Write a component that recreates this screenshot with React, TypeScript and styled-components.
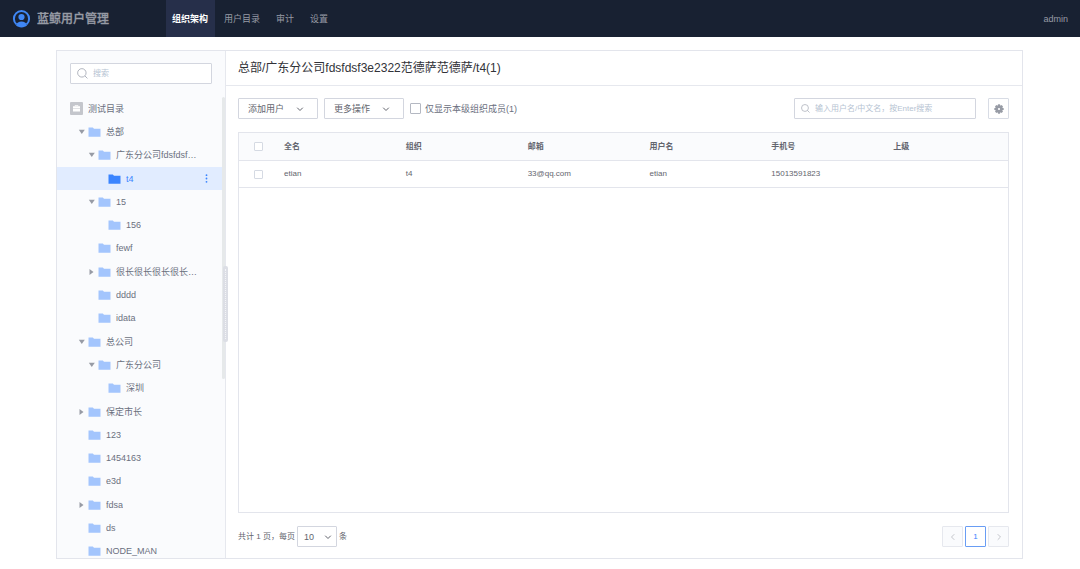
import React, { useState } from "react";
import styled, { createGlobalStyle, css } from "styled-components";

const GlobalStyle = createGlobalStyle`
  *, *::before, *::after { box-sizing: border-box; }
  body {
    margin: 0;
    background: #fff;
    color: #63656e;
    font: 9px/12px "Liberation Sans", "Noto Sans CJK SC", sans-serif;
  }
  button, input, select { font: inherit; color: inherit; margin: 0; }
  button { cursor: pointer; }
`;

const Page = styled.div`
  height: 100vh;
  display: flex;
  flex-direction: column;
`;

const TopBar = styled.header`
  flex: none;
  height: 37px;
  padding: 0 12px;
  display: flex;
  align-items: center;
  background: #182132;
  color: #979ba5;
`;

const Brand = styled.a`
  width: 154px;
  display: flex;
  align-items: center;
  gap: 6px;
  color: #979ba5;
  font-size: 12px;
  font-weight: 500;
  line-height: 16px;
  text-decoration: none;
  -webkit-text-stroke: 0.3px currentColor;
`;

const Nav = styled.nav`
  flex: 1;
  align-self: stretch;
  display: flex;
`;

const NavLink = styled.a<{ $active?: boolean }>`
  display: flex;
  align-items: center;
  padding: 0 8px;
  color: #979ba5;
  text-decoration: none;
  ${(p) =>
    p.$active &&
    css`
      margin-right: 1px;
      padding: 0 7px 0 6px;
      background: #262f4a;
      color: #fff;
      font-weight: 700;
    `}
`;

const Panel = styled.main`
  flex: 1;
  min-height: 0;
  margin: 13px 57px 10px 56px;
  display: flex;
  border: 1px solid #e3e5ec;
`;

const Sidebar = styled.aside`
  position: relative;
  flex: none;
  width: 169px;
  display: flex;
  flex-direction: column;
  background: #fafbfd;
  border-right: 1px solid #e6e8ee;
`;

const SearchBox = styled.label<{ $width?: number }>`
  flex: none;
  height: 21px;
  width: ${(p) => (p.$width ? `${p.$width}px` : "auto")};
  padding: 0 6px;
  display: flex;
  align-items: center;
  gap: 5px;
  background: #fff;
  border: 1px solid #d3d6df;
  border-radius: 1px;
  svg { flex: none; }
  input {
    flex: 1;
    min-width: 0;
    padding: 0;
    border: 0;
    outline: 0;
    background: none;
    font-size: 8px;
  }
  input::placeholder { color: #b6c3d2; opacity: 1; }
`;

const SideSearch = styled.div`
  padding: 12px 13px 13px;
`;

const TreeViewport = styled.div`
  flex: 1;
  min-height: 0;
  margin-right: 3px;
  overflow: hidden;
`;

const TreeList = styled.ul`
  height: 466px;
  margin: 0;
  padding: 0;
  display: grid;
  grid-template-columns: minmax(0, 1fr);
  grid-auto-rows: 1fr;
  list-style: none;
`;

const TreeRow = styled.li<{ $depth: number; $active?: boolean }>`
  min-height: 0;
  padding-left: ${(p) => (p.$depth ? 11 + p.$depth * 10 : 13)}px;
  padding-right: ${(p) => (p.$active ? 12 : 22)}px;
  display: flex;
  align-items: center;
  color: ${(p) => (p.$active ? "#3a84ff" : "#6b7080")};
  background: ${(p) => (p.$active ? "#e1ecff" : "transparent")};
`;

const Caret = styled.button`
  flex: none;
  width: 10px;
  height: 12px;
  padding: 0;
  border: 0;
  background: none;
  display: flex;
  align-items: center;
  color: #979ba5;
`;

const CaretSpace = styled.span`
  flex: none;
  width: 10px;
`;

const NodeLabel = styled.a`
  flex: 1;
  min-width: 0;
  display: flex;
  align-items: center;
  gap: 5px;
  color: inherit;
  text-decoration: none;
  svg { flex: none; }
  span {
    overflow: hidden;
    white-space: nowrap;
    text-overflow: ellipsis;
  }
`;

const MoreButton = styled.button`
  flex: none;
  width: 7px;
  height: 12px;
  padding: 0;
  border: 0;
  background: none;
  display: flex;
  align-items: center;
  justify-content: center;
`;

const ScrollThumb = styled.div`
  position: absolute;
  top: 46px;
  right: 0;
  width: 3px;
  height: 282px;
  border-radius: 2px;
  background: #e6e9ea;
`;

const ResizeHandle = styled.div`
  position: absolute;
  top: 215px;
  right: -3px;
  width: 5px;
  height: 76px;
  border-radius: 2px;
  background: #dcdee5;
  display: flex;
  justify-content: center;
  &::after {
    content: "";
    margin: 3px 0;
    border-left: 1px dotted #f4f5f8;
  }
`;

const Content = styled.section`
  flex: 1;
  min-width: 0;
  display: flex;
  flex-direction: column;
`;

const Title = styled.h1`
  flex: none;
  height: 35px;
  margin: 0;
  padding: 0 12px;
  border-bottom: 1px solid #e6e8ee;
  color: #313238;
  font-size: 12px;
  font-weight: 400;
  line-height: 34px;
`;

const Body = styled.div`
  flex: 1;
  min-height: 0;
  padding: 12px 13px 11px 12px;
  display: flex;
  flex-direction: column;
  gap: 13px;
`;

const Toolbar = styled.div`
  display: flex;
  align-items: center;
  gap: 6px;
`;

const MenuButton = styled.button`
  width: 80px;
  height: 21px;
  padding: 0 13px 0 9px;
  display: flex;
  align-items: center;
  justify-content: space-between;
  background: #fff;
  border: 1px solid #d3d6df;
  border-radius: 1px;
`;

const CheckLabel = styled.label`
  flex: 1;
  display: flex;
  align-items: center;
  gap: 4px;
  color: #6b7080;
`;

const Check = styled.input.attrs({ type: "checkbox" })<{ $size: number; $tone: string }>`
  appearance: none;
  display: block;
  flex: none;
  width: ${(p) => p.$size}px;
  height: ${(p) => p.$size}px;
  border: 1px solid ${(p) => p.$tone};
  border-radius: 1px;
  background: #fff;
  &:checked { background: #3a84ff; border-color: #3a84ff; }
`;

const SquareButton = styled.button<{ $current?: boolean }>`
  width: 21px;
  height: 21px;
  padding: 0;
  display: flex;
  align-items: center;
  justify-content: center;
  border: 1px solid ${(p) => (p.$current ? "#699df4" : "#d8dce5")};
  border-radius: 1px;
  background: #fff;
  color: ${(p) => (p.$current ? "#3a84ff" : "#979ba5")};
  font-size: 8px;
  &:disabled {
    background: #fafbfd;
    border-color: #e6e8ee;
    color: #c4c6cc;
  }
`;

const SettingsSlot = styled.div`
  margin-left: 6px;
`;

const TableFrame = styled.div`
  flex: 1;
  min-height: 0;
  border: 1px solid #e3e5ec;
`;

const Table = styled.table`
  width: 100%;
  table-layout: fixed;
  border-collapse: separate;
  border-spacing: 0;
  font-size: 8px;
  text-align: left;
  th, td {
    height: 27px;
    padding: 0 7px;
    border-bottom: 1px solid #e3e5ec;
  }
  th {
    height: 28px;
    background: #fafbfd;
  }
  th:first-child, td:first-child {
    width: 38px;
    padding: 0 0 0 15px;
  }
`;

const Pager = styled.footer`
  display: flex;
  align-items: center;
  gap: 2px;
  font-size: 8px;
`;

const SizeLabel = styled.label`
  flex: 1;
  display: flex;
  align-items: center;
  gap: 2px;
`;

const SizeField = styled.span`
  display: grid;
  width: 40px;
  height: 21px;
  align-items: center;
  select, svg { grid-area: 1 / 1; }
  select {
    appearance: none;
    width: 100%;
    height: 21px;
    padding: 0 6px;
    border: 1px solid #d3d6df;
    border-radius: 1px;
    background: #fff;
    font-size: 9px;
  }
  svg {
    justify-self: end;
    margin-right: 5px;
    pointer-events: none;
  }
`;

const Logo = () => (
  <svg width="19" height="19" viewBox="0 0 19 19" aria-hidden="true">
    <path d="M4.400 15.300A7.600 7.600 0 1 1 14.600 15.300" fill="none" stroke="#3f87f5" strokeWidth="2" />
    <circle cx="9.500" cy="8" r="3.100" fill="#3f87f5" />
    <path d="M3.900 16.300C4.700 13.600 6.800 12.500 9.500 12.500s4.800 1.100 5.600 3.800C13.700 17.600 11.800 18.400 9.500 18.400s-4.200-.8-5.600-2.100z" fill="#3f87f5" />
  </svg>
);

const SearchIcon = ({ size }: { size: number }) => (
  <svg width={size} height={size} viewBox="0 0 12 12" fill="none" stroke="#a9adb8" aria-hidden="true">
    <circle cx="5.300" cy="5.300" r="4.600" />
    <path d="M8.700 8.700 11.400 11.400" />
  </svg>
);

const Folder = ({ active }: { active?: boolean }) => (
  <svg width="13" height="10" viewBox="0 0 13 10" aria-hidden="true">
    <path d="M.5.500h4.300L6 1.800h6.500v8H.5z" fill={active ? "#3a84ff" : "#a3c5fd"} />
  </svg>
);

const RootIcon = () => (
  <svg width="13" height="13" viewBox="0 0 13 13" aria-hidden="true">
    <rect width="13" height="13" rx="1" fill="#c4c6cc" />
    <path d="M5 4.300v-.8h3v.8" fill="none" stroke="#fff" strokeWidth=".7" />
    <path d="M3 4.300h7v1.900H3zM3 6.700h7v2.700H3z" fill="#fff" />
  </svg>
);

const CaretIcon = ({ open }: { open: boolean }) => (
  <svg width="8" height="8" viewBox="0 0 8 8" fill="currentColor" aria-hidden="true">
    <path d={open ? "M.8 1.800h6L3.800 6z" : "M1.500 .9v6.200L5.500 4z"} />
  </svg>
);

const Chevron = ({ turn = 0 }: { turn?: number }) => (
  <svg width="8" height="8" viewBox="0 0 8 8" fill="none" stroke="currentColor" aria-hidden="true">
    <path d="M1.200 2.700 4 5.500 6.800 2.700" transform={`rotate(${turn} 4 4)`} />
  </svg>
);

const Dots = () => (
  <svg width="3" height="9" viewBox="0 0 3 9" fill="#3a84ff" aria-hidden="true">
    <circle cx="1.500" cy="1.200" r=".9" />
    <circle cx="1.500" cy="4.500" r=".9" />
    <circle cx="1.500" cy="7.800" r=".9" />
  </svg>
);

const Gear = () => (
  <svg width="10" height="10" viewBox="0 0 10 10" aria-hidden="true">
    <g fill="#979ba5">
      {[0, 45, 90, 135].map((a) => (
        <rect key={a} x="3.900" y=".3" width="2.200" height="9.400" rx=".4" transform={`rotate(${a} 5 5)`} />
      ))}
      <circle cx="5" cy="5" r="3.700" />
    </g>
    <circle cx="5" cy="5" r="1.100" fill="#fff" />
  </svg>
);

type TreeNode = { name: string; depth: number; open?: boolean; active?: boolean };

const nodes: TreeNode[] = [
  { name: "测试目录", depth: 0 },
  { name: "总部", depth: 1, open: true },
  { name: "广东分公司fdsfdsf3e2322", depth: 2, open: true },
  { name: "t4", depth: 3, active: true },
  { name: "15", depth: 2, open: true },
  { name: "156", depth: 3 },
  { name: "fewf", depth: 2 },
  { name: "很长很长很长很长很长很长", depth: 2, open: false },
  { name: "dddd", depth: 2 },
  { name: "idata", depth: 2 },
  { name: "总公司", depth: 1, open: true },
  { name: "广东分公司", depth: 2, open: true },
  { name: "深圳", depth: 3 },
  { name: "保定市长", depth: 1, open: false },
  { name: "123", depth: 1 },
  { name: "1454163", depth: 1 },
  { name: "e3d", depth: 1 },
  { name: "fdsa", depth: 1, open: false },
  { name: "ds", depth: 1 },
  { name: "NODE_MAN", depth: 1 },
];

const columns = ["全名", "组织", "邮箱", "用户名", "手机号", "上级"];
const users = [["etian", "t4", "33@qq.com", "etian", "15013591823", ""]];

export default function App() {
  const [pageSize, setPageSize] = useState("10");

  return (
    <Page>
      <GlobalStyle />
      <TopBar>
        <Brand href="#home">
          <Logo />
          蓝鲸用户管理
        </Brand>
        <Nav>
          <NavLink href="#organization" $active>组织架构</NavLink>
          <NavLink href="#catalog">用户目录</NavLink>
          <NavLink href="#audit">审计</NavLink>
          <NavLink href="#settings">设置</NavLink>
        </Nav>
        <span>admin</span>
      </TopBar>

      <Panel>
        <Sidebar>
          <SideSearch>
            <SearchBox>
              <SearchIcon size={11} />
              <input type="text" placeholder="搜索" aria-label="搜索" />
            </SearchBox>
          </SideSearch>
          <TreeViewport>
            <TreeList>
              {nodes.map((n) => (
                <TreeRow key={n.name} $depth={n.depth} $active={n.active}>
                  {n.depth > 0 &&
                    (n.open === undefined ? (
                      <CaretSpace />
                    ) : (
                      <Caret aria-label={n.name} aria-expanded={n.open}>
                        <CaretIcon open={n.open} />
                      </Caret>
                    ))}
                  <NodeLabel href="#node">
                    {n.depth ? <Folder active={n.active} /> : <RootIcon />}
                    <span>{n.name}</span>
                  </NodeLabel>
                  {n.active && (
                    <MoreButton aria-label="更多">
                      <Dots />
                    </MoreButton>
                  )}
                </TreeRow>
              ))}
            </TreeList>
          </TreeViewport>
          <ScrollThumb />
          <ResizeHandle />
        </Sidebar>

        <Content>
          <Title>总部/广东分公司fdsfdsf3e2322范德萨范德萨/t4(1)</Title>
          <Body>
            <Toolbar>
              <MenuButton>添加用户 <Chevron /></MenuButton>
              <MenuButton>更多操作 <Chevron /></MenuButton>
              <CheckLabel>
                <Check $size={11} $tone="#b4b8c2" />
                仅显示本级组织成员(1)
              </CheckLabel>
              <SearchBox $width={182}>
                <SearchIcon size={9} />
                <input
                  type="text"
                  placeholder="输入用户名/中文名，按Enter搜索"
                  aria-label="输入用户名/中文名，按Enter搜索"
                />
              </SearchBox>
              <SettingsSlot>
                <SquareButton aria-label="设置"><Gear /></SquareButton>
              </SettingsSlot>
            </Toolbar>

            <TableFrame>
              <Table>
                <thead>
                  <tr>
                    <th><Check $size={9} $tone="#d5dae3" aria-label="全选" /></th>
                    {columns.map((c) => <th key={c}>{c}</th>)}
                  </tr>
                </thead>
                <tbody>
                  {users.map((row) => (
                    <tr key={row[4]}>
                      <td><Check $size={9} $tone="#d5dae3" aria-label={row[0]} /></td>
                      {row.map((cell, i) => <td key={columns[i]}>{cell}</td>)}
                    </tr>
                  ))}
                </tbody>
              </Table>
            </TableFrame>

            <Pager>
              <SizeLabel>
                共计 1 页，每页
                <SizeField>
                  <select value={pageSize} onChange={(e) => setPageSize(e.target.value)}>
                    <option>10</option>
                    <option>20</option>
                    <option>50</option>
                  </select>
                  <Chevron />
                </SizeField>
                条
              </SizeLabel>
              <SquareButton disabled aria-label="上一页"><Chevron turn={90} /></SquareButton>
              <SquareButton $current>1</SquareButton>
              <SquareButton disabled aria-label="下一页"><Chevron turn={-90} /></SquareButton>
            </Pager>
          </Body>
        </Content>
      </Panel>
    </Page>
  );
}
